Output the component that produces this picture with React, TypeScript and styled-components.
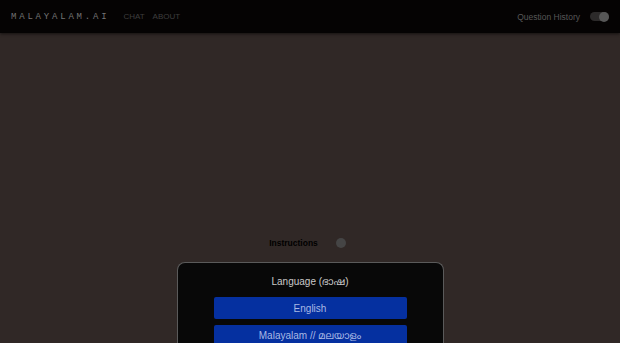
import styled, { createGlobalStyle } from 'styled-components'

const Global = createGlobalStyle`
  html, body {
    margin: 0;
    padding: 0;
    background: #302826;
    font-family: 'Liberation Sans', Arial, sans-serif;
  }
`

const Page = styled.div`
  display: flex;
  flex-direction: column;
  min-height: 343px;
  background: #302826;
`

const Header = styled.header`
  height: 33px;
  background: #050303;
  display: flex;
  align-items: center;
  padding: 0 11px;
  box-shadow: 0 1px 3px rgba(0, 0, 0, 0.6);
`

const Logo = styled.div`
  font-family: 'Liberation Mono', 'DejaVu Sans Mono', monospace;
  font-size: 9px;
  letter-spacing: 2.8px;
  color: #747474;
  margin-right: 14px;
`

const NavLink = styled.a`
  font-size: 8px;
  color: #3e3e3e;
  margin-right: 8px;
  text-transform: uppercase;
`

const Spacer = styled.div`
  flex: 1;
`

const HistoryLabel = styled.span`
  font-size: 8.5px;
  color: #575757;
  margin-right: 10px;
`

const Track = styled.div`
  width: 19px;
  height: 9px;
  border-radius: 5px;
  background: #2c2a2a;
  display: flex;
  align-items: center;
  justify-content: flex-end;
`

const Knob = styled.div<{ $tone: string }>`
  width: 10px;
  height: 10px;
  border-radius: 50%;
  background: ${p => p.$tone};
`

const Main = styled.main`
  flex: 1;
  display: flex;
  flex-direction: column;
  align-items: center;
  padding-top: 203px;
`

const InstructionsRow = styled.div`
  display: flex;
  align-items: center;
  gap: 18px;
  margin-left: -5px;
  height: 14px;
`

const InstructionsLabel = styled.span`
  font-size: 8.5px;
  font-weight: bold;
  color: #000;
`

const Card = styled.section`
  margin-top: 12px;
  width: 267px;
  background: #080808;
  border: 1px solid #5a5a5a;
  border-bottom: none;
  border-radius: 8px 8px 0 0;
  padding: 12px 36px 0;
  box-sizing: border-box;
  display: flex;
  flex-direction: column;
  align-items: stretch;
  height: 82px;
  overflow: hidden;
`

const CardTitle = styled.div`
  text-align: center;
  font-size: 10px;
  color: #c8c8c8;
  margin-top: 1px;
  margin-bottom: 8px;
  font-family: 'Liberation Sans', 'Noto Sans Malayalam', 'Noto Sans', sans-serif;
`

const LangButton = styled.button`
  height: 22px;
  border: none;
  border-radius: 2px;
  background: #0530a0;
  color: #a9b9e4;
  font-size: 10px;
  font-family: 'Liberation Sans', 'Noto Sans Malayalam', 'Noto Sans', sans-serif;
  margin-bottom: 6px;
  padding: 0;
  flex-shrink: 0;
`

export default function App() {
  return (
    <>
      <Global />
      <Page>
        <Header>
          <Logo>MALAYALAM.AI</Logo>
          <NavLink>Chat</NavLink>
          <NavLink>About</NavLink>
          <Spacer />
          <HistoryLabel>Question History</HistoryLabel>
          <Track>
            <Knob $tone="#575757" />
          </Track>
        </Header>
        <Main>
          <InstructionsRow>
            <InstructionsLabel>Instructions</InstructionsLabel>
            <Knob $tone="#454545" />
          </InstructionsRow>
          <Card>
            <CardTitle>Language (ഭാഷ)</CardTitle>
            <LangButton>English</LangButton>
            <LangButton>Malayalam // മലയാളം</LangButton>
          </Card>
        </Main>
      </Page>
    </>
  )
}
